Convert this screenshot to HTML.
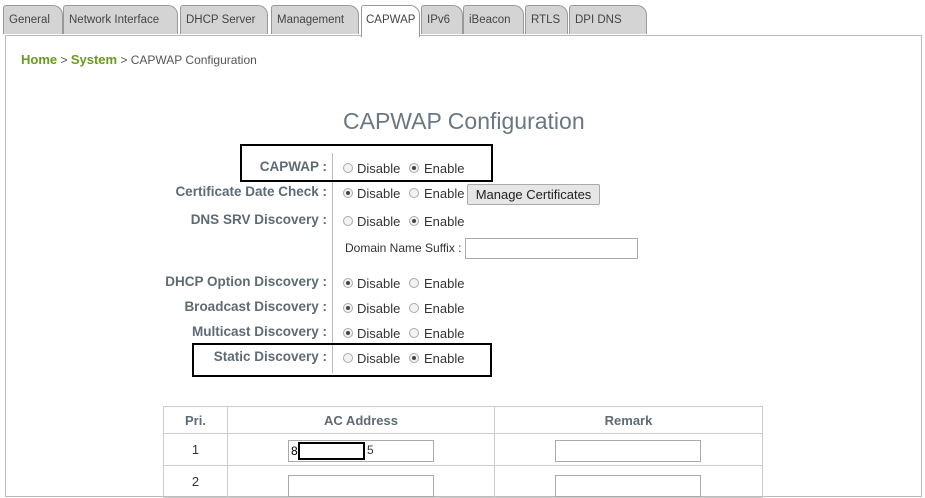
<!DOCTYPE html>
<html><head><style>
body{margin:0;width:925px;height:486px;overflow:hidden;background:#fff;font-family:"Liberation Sans",Tahoma,sans-serif;position:relative}
.a{position:absolute}
.tab{position:absolute;top:5px;height:29px;background:#d4d4d4;border:1px solid #999;border-bottom:none;border-radius:3px 10px 0 0;font-size:11.5px;color:#444;line-height:28px;padding-left:5px;box-sizing:border-box;white-space:nowrap;overflow:hidden}
.frame{position:absolute;left:5px;top:35px;width:915px;height:460px;border:1px solid #bbb;background:#fff}
.lbl{position:absolute;right:598px;font-size:13.5px;font-weight:bold;color:#5f6b74;text-align:right;white-space:nowrap}
.r{position:absolute;width:10px;height:10px;border:1px solid #aaa;border-radius:50%;background:#f2f2f2;box-sizing:border-box}
.r.on::after{content:"";position:absolute;left:2px;top:2px;width:4px;height:4px;border-radius:50%;background:#444}
.t{position:absolute;font-size:13px;color:#333}
.inp{position:absolute;border:1px solid #aaa;background:#fff;box-sizing:border-box}
td,th{border:1px solid #ccc;font-size:13px;color:#333;text-align:center;font-weight:normal;padding:0}
th{color:#5f6b74;font-weight:bold}
</style></head><body>
<div class="tab" style="left:3px;width:60px">General</div>
<div class="tab" style="left:63px;width:115px">Network Interface</div>
<div class="tab" style="left:180px;width:88px">DHCP Server</div>
<div class="tab" style="left:271px;width:88px">Management</div>
<div class="tab" style="left:421px;width:42px">IPv6</div>
<div class="tab" style="left:463px;width:61px">iBeacon</div>
<div class="tab" style="left:525px;width:43px">RTLS</div>
<div class="tab" style="left:569px;width:78px">DPI DNS</div>
<div class="frame"></div>
<div class="tab" style="left:361px;width:59px;background:#fff;height:32px;z-index:2;padding-left:4px">CAPWAP</div>
<div class="a" style="left:21px;top:52px;font-size:12px;color:#555"><b style="color:#6a9a1f;font-size:13px">Home</b> &gt; <b style="color:#6a9a1f;font-size:13px">System</b> &gt; CAPWAP Configuration</div>
<div class="a" style="left:343px;top:108px;font-size:23px;color:#6b7780">CAPWAP Configuration</div>
<div class="a" style="left:332px;top:153px;width:1px;height:220px;background:#bbb"></div>
<div class="a" style="left:240px;top:144px;width:249px;height:34px;border:2px solid #000;box-sizing:content-box"></div>
<div class="a" style="left:192px;top:343px;width:296px;height:30px;border:2px solid #000"></div>

<div class="lbl" style="top:159px">CAPWAP :</div>
<div class="r" style="left:343px;top:163px"></div><div class="t" style="left:357px;top:161px">Disable</div>
<div class="r on" style="left:409px;top:163px"></div><div class="t" style="left:424px;top:161px">Enable</div>

<div class="lbl" style="top:184px">Certificate Date Check :</div>
<div class="r on" style="left:343px;top:188px"></div><div class="t" style="left:357px;top:186px">Disable</div>
<div class="r" style="left:409px;top:188px"></div><div class="t" style="left:424px;top:186px">Enable</div>
<div class="a" style="left:467px;top:184px;width:133px;height:21px;background:#e6e6e6;border:1px solid #aaa;border-radius:2px;font-size:13px;color:#222;text-align:center;line-height:20px;box-sizing:border-box">Manage Certificates</div>

<div class="lbl" style="top:212px">DNS SRV Discovery :</div>
<div class="r" style="left:343px;top:216px"></div><div class="t" style="left:357px;top:214px">Disable</div>
<div class="r on" style="left:409px;top:216px"></div><div class="t" style="left:424px;top:214px">Enable</div>
<div class="t" style="left:345px;top:241px;font-size:12px">Domain Name Suffix :</div>
<div class="inp" style="left:465px;top:238px;width:173px;height:21px"></div>

<div class="lbl" style="top:274px">DHCP Option Discovery :</div>
<div class="r on" style="left:343px;top:278px"></div><div class="t" style="left:357px;top:276px">Disable</div>
<div class="r" style="left:409px;top:278px"></div><div class="t" style="left:424px;top:276px">Enable</div>
<div class="lbl" style="top:299px">Broadcast Discovery :</div>
<div class="r on" style="left:343px;top:303px"></div><div class="t" style="left:357px;top:301px">Disable</div>
<div class="r" style="left:409px;top:303px"></div><div class="t" style="left:424px;top:301px">Enable</div>
<div class="lbl" style="top:324px">Multicast Discovery :</div>
<div class="r on" style="left:343px;top:328px"></div><div class="t" style="left:357px;top:326px">Disable</div>
<div class="r" style="left:409px;top:328px"></div><div class="t" style="left:424px;top:326px">Enable</div>
<div class="lbl" style="top:349px">Static Discovery :</div>
<div class="r" style="left:343px;top:353px"></div><div class="t" style="left:357px;top:351px">Disable</div>
<div class="r on" style="left:409px;top:353px"></div><div class="t" style="left:424px;top:351px">Enable</div>

<table class="a" style="left:163px;top:406px;width:600px;border-collapse:collapse;table-layout:fixed">
<tr style="height:27px"><th style="width:63px">Pri.</th><th style="width:266px">AC Address</th><th>Remark</th></tr>
<tr style="height:32px"><td>1</td><td></td><td></td></tr>
<tr style="height:32px"><td>2</td><td></td><td></td></tr>
</table>
<div class="inp" style="left:288px;top:440px;width:146px;height:22px;font-size:12px;line-height:20px;padding-left:2px">8</div>
<div class="a" style="left:298px;top:442px;width:63px;height:14px;border:2px solid #000;background:#fff"></div>
<div class="t" style="left:367px;top:443px;font-size:12px">5</div>
<div class="inp" style="left:555px;top:440px;width:146px;height:22px"></div>
<div class="inp" style="left:288px;top:475px;width:146px;height:22px"></div>
<div class="inp" style="left:555px;top:475px;width:146px;height:22px"></div>
</body></html>
